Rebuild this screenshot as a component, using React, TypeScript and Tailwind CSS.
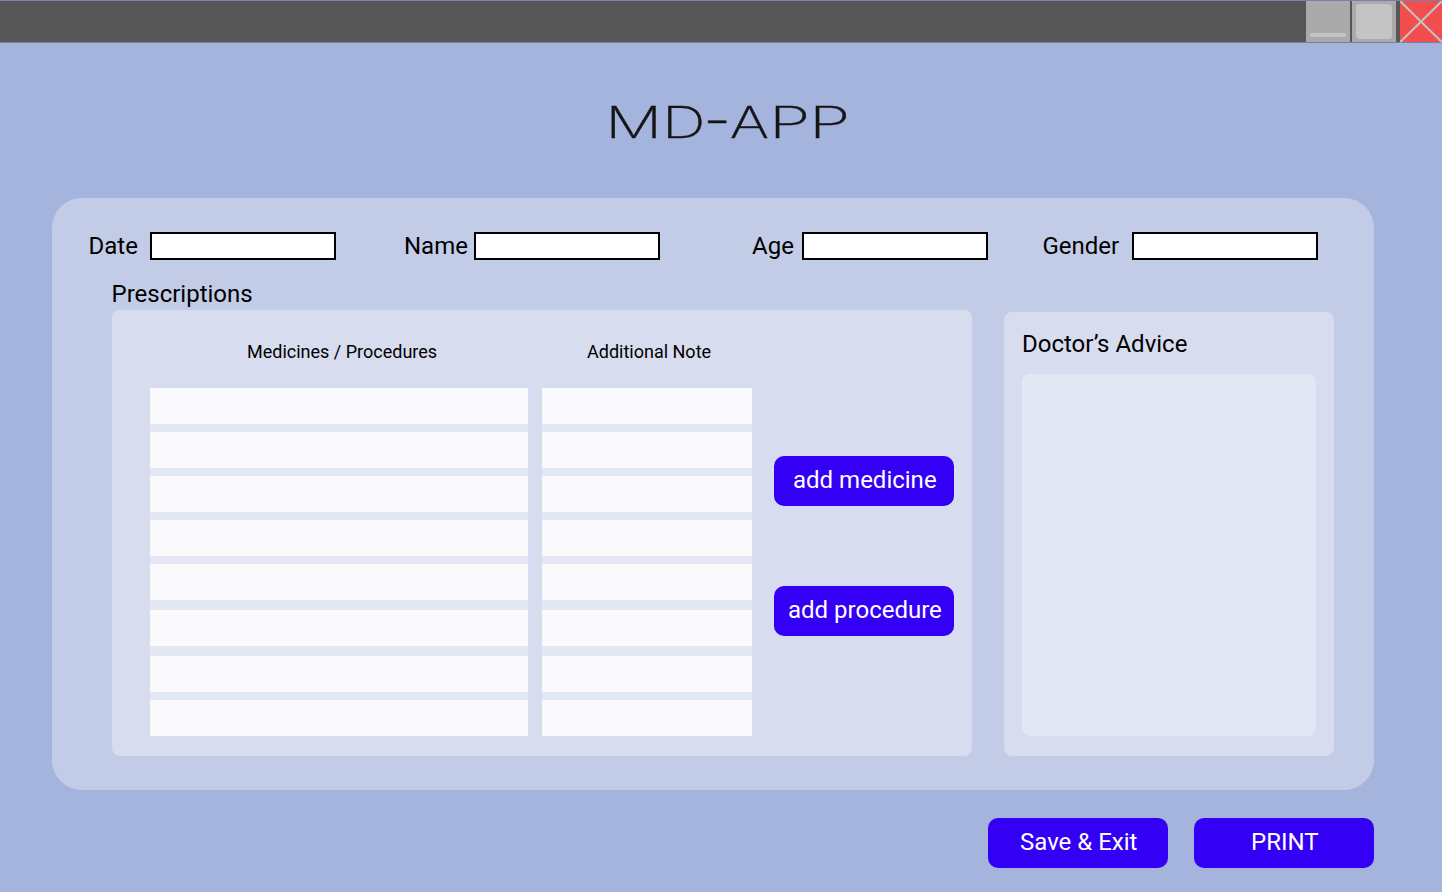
import React from 'react';

const rowHeights = ['mb-2', 'mb-2', 'mb-2', 'mb-2', 'mb-2.5', 'mb-2.5', 'mb-2', ''];

function Field({ label, className, labelClass }: { label: string; className: string; labelClass: string }) {
  return (
    <label className={`flex h-7 shrink-0 items-center ${className}`}>
      <span className={`shrink-0 whitespace-nowrap leading-7 ${labelClass}`}>{label}</span>
      <input className="h-7 w-[186px] shrink-0 border-2 border-black bg-white px-1 text-base outline-none" />
    </label>
  );
}

function Column({ width }: { width: string }) {
  return (
    <div className={`bg-[#e3e7f3] ${width}`}>
      {rowHeights.map((gap, i) => (
        <div key={i} className={`h-9 bg-[#fafafd] ${gap}`} />
      ))}
    </div>
  );
}

function ActionButton({ children, className = '' }: { children: React.ReactNode; className?: string }) {
  return (
    <button
      className={`block h-[50px] w-[180px] shrink-0 whitespace-nowrap rounded-[10px] bg-[#3300f5] pb-0.5 text-left text-2xl leading-7 text-white ${className}`}
    >
      {children}
    </button>
  );
}

function TitleBar() {
  return (
    <header className="h-[42.5px]">
      <div className="flex h-[42.5px] justify-end border-y border-[#7783a4] bg-[#565656]">
        <div className="flex w-11 items-end justify-center bg-[#aaaaaa] pb-[5px]">
          <div className="h-1 w-9 rounded-sm bg-[#c4c4c4]" />
        </div>
        <div className="ml-0.5 flex w-11 justify-center bg-[#aaaaaa] pt-[3px]">
          <div className="h-[34.5px] w-9 rounded-sm bg-[#c4c4c4]" />
        </div>
        <div className="ml-1 w-[42px] bg-[#f24e4e]">
          <svg className="block h-full w-full overflow-visible" viewBox="0 0 42 41" preserveAspectRatio="none">
            <path d="M0.3 0.3 41.7 41.5M41.7 0.3 0.3 41.5" stroke="#c4c4c4" strokeWidth="2" />
          </svg>
        </div>
      </div>
    </header>
  );
}

const titleLetters = [
  { char: 'M', cell: 'w-[45px]', glyph: 'scale-x-[1.44]' },
  { char: 'D', cell: 'ml-[10px] w-[35px]', glyph: 'scale-x-[1.38]' },
  { char: '-', cell: "ml-[7px] w-[19px] font-['Roboto',sans-serif] font-light", glyph: 'scale-x-[1.75] -translate-y-px' },
  { char: 'A', cell: 'ml-[4px] w-[37px]', glyph: 'scale-x-[1.36]' },
  { char: 'P', cell: 'ml-[6px] w-[32px]', glyph: 'scale-x-[1.52]' },
  { char: 'P', cell: 'ml-[8px] w-[32px]', glyph: 'scale-x-[1.52]' },
];

export default function App() {
  return (
    <div className="h-[892px] w-[1444px] overflow-hidden bg-white">
      <div className="h-[892px] w-[1442px] bg-[#a5b4dd] font-['Roboto',sans-serif] text-2xl text-black">
        <TitleBar />
        <h1 className="ml-[611px] mt-[51.5px] flex h-14 font-['Inter',sans-serif] text-[44px] font-extralight leading-[56px] text-[#151515] [-webkit-text-stroke:0.35px_#151515]">
          {titleLetters.map((l, i) => (
            <span key={i} className={`flex shrink-0 justify-center ${l.cell}`}>
              <span className={`inline-block ${l.glyph}`}>{l.char}</span>
            </span>
          ))}
        </h1>
        <main className="ml-[52px] mt-12 h-[592px] w-[1322px] rounded-[30px] bg-[#c3cce7] pt-[34px]">
          <div className="flex pl-9">
            <Field label="Date" className="" labelClass="w-[62px] pl-[0.5px]" />
            <Field label="Name" className="ml-[68px]" labelClass="w-[70px]" />
            <Field label="Age" className="ml-[92px]" labelClass="w-[50px]" />
            <Field label="Gender" className="ml-[54px]" labelClass="w-[90px] pl-[0.5px]" />
          </div>
          <div className="flex pl-[60px] pt-5">
            <section className="w-[860px]">
              <h2 className="-ml-[0.5px] h-[30px] leading-7">Prescriptions</h2>
              <div className="h-[446px] rounded-lg bg-[#d7dcef] pl-[38px] pt-[31px]">
                <div className="flex h-[47px] text-lg leading-[22px]">
                  <span className="w-[340px] pl-[97px]">Medicines / Procedures</span>
                  <span className="pl-[97px]">Additional Note</span>
                </div>
                <div className="flex">
                  <Column width="w-[378px]" />
                  <Column width="ml-3.5 w-[210px]" />
                  <div className="ml-[22px] pt-[68px]">
                    <ActionButton className="pl-[19px]">add medicine</ActionButton>
                    <ActionButton className="mt-20 pl-3.5">add procedure</ActionButton>
                  </div>
                </div>
              </div>
            </section>
            <aside className="ml-8 mt-8 h-[444px] w-[330px] rounded-lg bg-[#d7dcef] px-[18px] pt-[18px]">
              <h2 className="h-11 leading-7">Doctor’s Advice</h2>
              <div className="h-[362px] rounded-lg bg-[#e3e7f3]" />
            </aside>
          </div>
        </main>
        <footer className="mt-7 flex justify-end gap-[26px] pr-[68px]">
          <ActionButton className="pl-8">Save &amp; Exit</ActionButton>
          <ActionButton className="pl-[57px]">PRINT</ActionButton>
        </footer>
      </div>
    </div>
  );
}
